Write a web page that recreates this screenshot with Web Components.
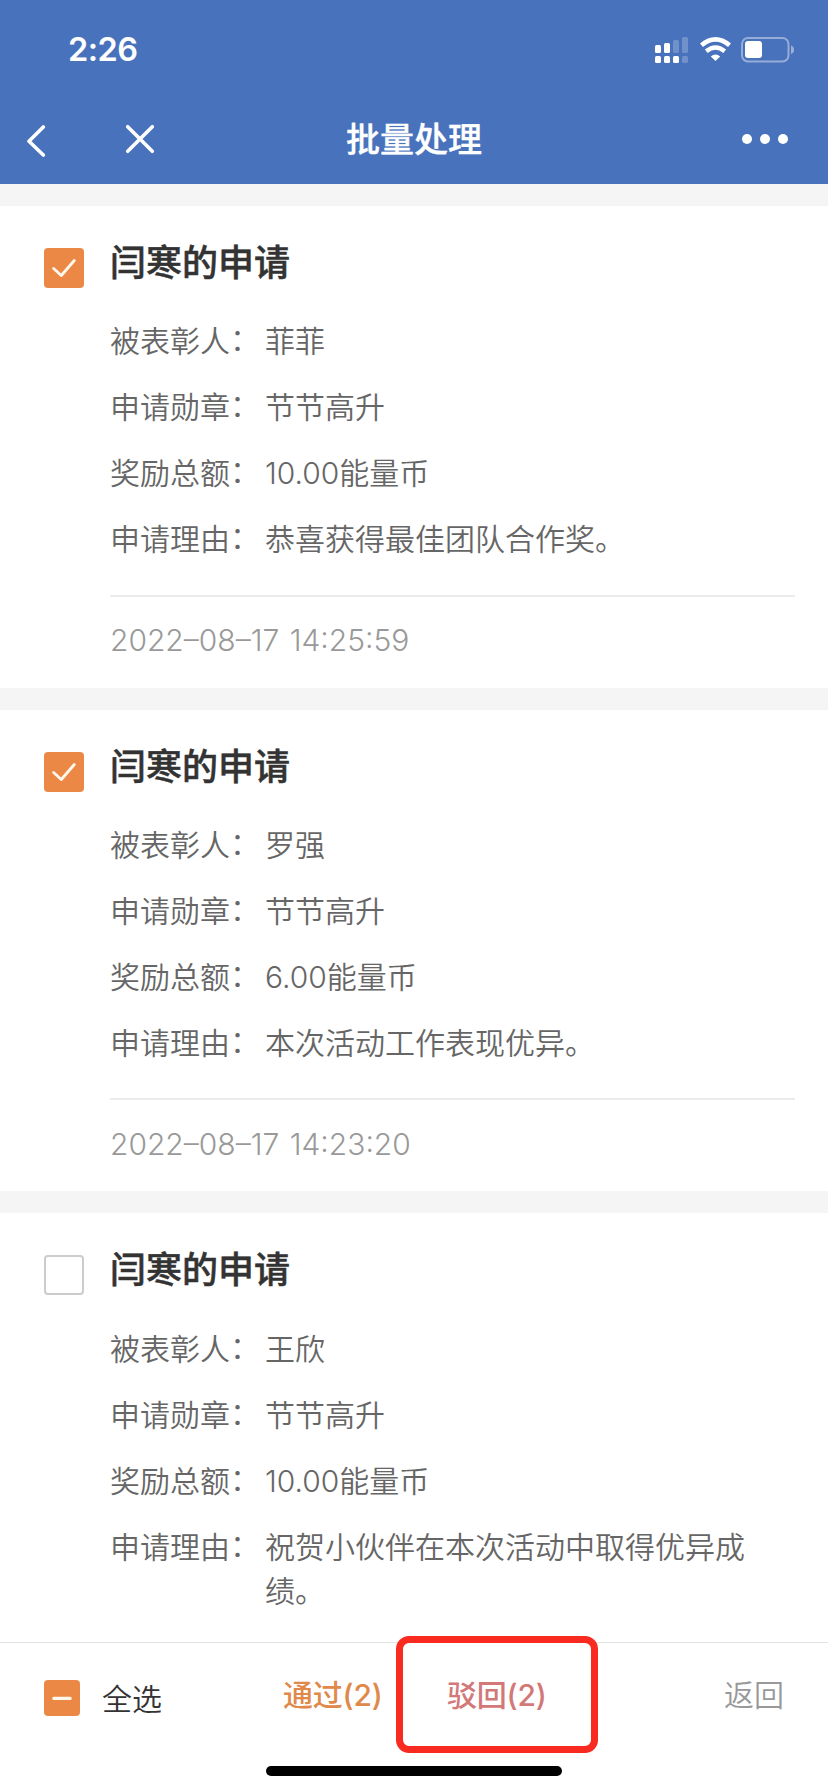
<!DOCTYPE html>
<html lang="zh-CN">
<head>
<meta charset="UTF-8">
<meta name="viewport" content="width=device-width, initial-scale=1.0">
<title>批量处理</title>
<style>
    body{
        margin: 0;
        background: #f5f5f5;
        font-family: Inter, "Noto Sans CJK SC", sans-serif;
        color: #666;
    }
</style>
</head>
<body>
<batch-page>
    <status-bar slot="top" hora="2:26"></status-bar>
    <nav-bar slot="top">批量处理</nav-bar>

    <apply-card estado="on" fecha="2022–08–17 14:25:59">
        <span slot="title">闫寒的申请</span>
        <apply-row label="被表彰人">菲菲</apply-row>
        <apply-row label="申请勋章">节节高升</apply-row>
        <apply-row label="奖励总额">10.00能量币</apply-row>
        <apply-row label="申请理由">恭喜获得最佳团队合作奖。</apply-row>
    </apply-card>
    <apply-card estado="on" fecha="2022–08–17 14:23:20">
        <span slot="title">闫寒的申请</span>
        <apply-row label="被表彰人">罗强</apply-row>
        <apply-row label="申请勋章">节节高升</apply-row>
        <apply-row label="奖励总额">6.00能量币</apply-row>
        <apply-row label="申请理由">本次活动工作表现优异。</apply-row>
    </apply-card>
    <apply-card estado="off">
        <span slot="title">闫寒的申请</span>
        <apply-row label="被表彰人">王欣</apply-row>
        <apply-row label="申请勋章">节节高升</apply-row>
        <apply-row label="奖励总额">10.00能量币</apply-row>
        <apply-row label="申请理由">祝贺小伙伴在本次活动中取得优异成绩。</apply-row>
    </apply-card>

    <action-bar slot="bottom">
        <span slot="all">全选</span>
        <span slot="pass">通过(2)</span>
        <span slot="reject">驳回(2)</span>
        <span slot="back">返回</span>
    </action-bar>
</batch-page>

<script>
class BatchPage extends HTMLElement{
    constructor(){
        super();
        this.attachShadow({ mode: "open" });
    }
    connectedCallback(){
        this.shadowRoot.innerHTML = `
        <style>
        :host{
            display: flex;
            flex-direction: column;
            width: 828px;
            height: 1792px;
            overflow: hidden;
        }
        header{
            background: #4972bc;
            height: 184px;
            flex: none;
        }
        main{
            flex: 1;
            min-height: 0;
            overflow: hidden;
            display: flex;
            flex-direction: column;
            gap: 22px;
            padding-top: 22px;
        }
        </style>
        <header><slot name="top"></slot></header>
        <main><slot></slot></main>
        <slot name="bottom"></slot>
        `;
    }
}
window.customElements.define("batch-page", BatchPage);

class StatusBar extends HTMLElement{
    constructor(){
        super();
        this.attachShadow({ mode: "open" });
    }
    connectedCallback(){
        this.shadowRoot.innerHTML = `
        <style>
        :host{
            display: flex;
            align-items: center;
            justify-content: space-between;
            box-sizing: border-box;
            height: 95px;
            padding: 4px 33px 0 68px;
            color: #fff;
        }
        #hora{
            font-size: 32.5px;
            font-weight: 600;
            letter-spacing: -.5px;
            line-height: 40px;
        }
        svg{
            display: block;
        }
        </style>
        <div id="hora">${this.getAttribute("hora")}</div>
        <svg width="140" height="27" viewBox="655 36 140 27" fill="#fff">
            <g id="signal">
                <rect x="655" y="45" width="6" height="8" rx="1.5"/>
                <rect x="664" y="43" width="6" height="10" rx="1.5"/>
                <rect x="673" y="40" width="6" height="13" rx="1.5" opacity=".22"/>
                <rect x="682" y="37" width="6" height="16" rx="1.5" opacity=".22"/>
                <rect x="655" y="56" width="6" height="7" rx="1.5"/>
                <rect x="664" y="56" width="6" height="7" rx="1.5"/>
                <rect x="673" y="56" width="6" height="7" rx="1.5"/>
                <rect x="682" y="56" width="6" height="7" rx="1.5" opacity=".22"/>
            </g>
            <g id="wifi">
                <path d="M701.5 45.2Q715.5 33.6 729.5 45.2" fill="none" stroke="#fff" stroke-width="4.6"/>
                <path d="M706.3 51.2Q715.5 43.8 724.7 51.2" fill="none" stroke="#fff" stroke-width="4.5"/>
                <path d="M715.5 61L710.8 56.4Q715.5 52.6 720.2 56.4Z"/>
            </g>
            <g id="battery">
                <rect x="742" y="38" width="46.5" height="23.5" rx="6" fill="none" stroke="#fff" stroke-width="2" opacity=".42"/>
                <rect x="745" y="41" width="17" height="17" rx="3"/>
                <path d="M791 45.5Q794 46.5 794 49.7T791 54Z" opacity=".45"/>
            </g>
        </svg>
        `;
    }
}
window.customElements.define("status-bar", StatusBar);

class NavBar extends HTMLElement{
    constructor(){
        super();
        this.attachShadow({ mode: "open" });
    }
    connectedCallback(){
        this.shadowRoot.innerHTML = `
        <style>
        :host{
            display: grid;
            grid-template-columns: 1fr auto 1fr;
            align-items: center;
            height: 88px;
            color: #fff;
        }
        #izq{
            display: flex;
            align-items: center;
            gap: 79px;
            padding-left: 26px;
        }
        #titulo{
            font-size: 34px;
            font-weight: 500;
            line-height: 48px;
            padding-top: 2px;
            -webkit-text-stroke: .3px #fff;
        }
        #mas{
            justify-self: end;
            padding-right: 40px;
        }
        svg{
            display: block;
        }
        </style>
        <div id="izq">
            <svg width="20" height="36" viewBox="0 0 20 36" fill="none" stroke="#fff" stroke-width="3.6" stroke-linecap="round" stroke-linejoin="round">
                <path d="M17.3 6L3 20.3L17.3 34"/>
            </svg>
            <svg width="30" height="30" viewBox="0 0 30 30" fill="none" stroke="#fff" stroke-width="3.6" stroke-linecap="round">
                <path d="M2.7 2.7L27.3 27.3M27.3 2.7L2.7 27.3"/>
            </svg>
        </div>
        <div id="titulo"><slot></slot></div>
        <div id="mas">
            <svg width="46" height="10" viewBox="0 0 46 10" fill="#fff">
                <circle cx="5" cy="5" r="5"/><circle cx="23" cy="5" r="5"/><circle cx="41" cy="5" r="5"/>
            </svg>
        </div>
        `;
    }
}
window.customElements.define("nav-bar", NavBar);

class CheckBox extends HTMLElement{
    constructor(){
        super();
        this.attachShadow({ mode: "open" });
    }
    connectedCallback(){
        let estado = this.getAttribute("estado");
        let dibujo = "";
        if(estado == "on"){
            dibujo = `<path d="M9.6 20.5L17.3 27.5L30.3 12.5"/>`;
        }
        if(estado == "half"){
            dibujo = `<path d="M11 20.5H29" stroke-width="3.6"/>`;
        }
        this.shadowRoot.innerHTML = `
        <style>
        :host{
            display: block;
            flex: none;
            box-sizing: border-box;
            width: var(--lado, 40px);
            height: var(--lado, 40px);
            border-radius: 4px;
            background: ${estado == "off" ? "#fff" : "#eb8845"};
            border: ${estado == "off" ? "2px solid #ccc" : "0"};
        }
        svg{
            display: block;
            width: 100%;
            height: 100%;
        }
        </style>
        <svg viewBox="0 0 40 40" fill="none" stroke="#fff8ee" stroke-width="2.8" stroke-linecap="round" stroke-linejoin="round">${dibujo}</svg>
        `;
    }
}
window.customElements.define("check-box", CheckBox);

class ApplyRow extends HTMLElement{
    constructor(){
        super();
        this.attachShadow({ mode: "open" });
    }
    connectedCallback(){
        this.shadowRoot.innerHTML = `
        <style>
        :host{
            display: flex;
            gap: 5px;
            font-size: 30px;
            line-height: 44px;
        }
        #label{
            flex: none;
            width: 150px;
            white-space: nowrap;
        }
        /* the full-width colon sits low in Noto, lift it a little */
        #label span{
            display: inline-block;
            transform: translateY(-2px);
        }
        #valor{
            width: 490px;
        }
        </style>
        <div id="label">${this.getAttribute("label")}<span>：</span></div>
        <div id="valor"><slot></slot></div>
        `;
    }
}
window.customElements.define("apply-row", ApplyRow);

class ApplyCard extends HTMLElement{
    constructor(){
        super();
        this.attachShadow({ mode: "open" });
    }
    connectedCallback(){
        let fecha = this.getAttribute("fecha");
        this.shadowRoot.innerHTML = `
        <style>
        :host{
            display: flex;
            flex: none;
            gap: 26px;
            box-sizing: border-box;
            height: 481.7px;
            padding: 32px 33px 0 44px;
            background: #fff;
        }
        check-box{
            margin-top: 10px;
        }
        #cuerpo{
            flex: 1;
        }
        #titulo{
            font-size: 36px;
            font-weight: 500;
            line-height: 50px;
            color: #333;
            -webkit-text-stroke: .5px #333;
        }
        #filas{
            display: flex;
            flex-direction: column;
            gap: 22px;
            padding: 31.2px 0 33.6px;
            font-weight: 350;
        }
        #fecha{
            border-top: 2px solid #ebebeb;
            padding-top: 21.5px;
            font-size: 30px;
            font-weight: 350;
            word-spacing: 2px;
            line-height: 44px;
            color: #999;
        }
        </style>
        <check-box estado="${this.getAttribute("estado")}"></check-box>
        <div id="cuerpo">
            <div id="titulo"><slot name="title"></slot></div>
            <div id="filas"><slot></slot></div>
            ${fecha ? `<div id="fecha">${fecha}</div>` : ""}
        </div>
        `;
    }
}
window.customElements.define("apply-card", ApplyCard);

class ActionBar extends HTMLElement{
    constructor(){
        super();
        this.attachShadow({ mode: "open" });
    }
    connectedCallback(){
        this.shadowRoot.innerHTML = `
        <style>
        :host{
            display: flex;
            flex-direction: column;
            align-items: center;
            flex: none;
            box-sizing: border-box;
            height: 150px;
            border-top: 1px solid #e2e2e2;
            background: #fff;
            position: relative;
        }
        #fila{
            display: grid;
            grid-template-columns: 239px 164px 277px 1fr;
            align-items: center;
            align-self: stretch;
            height: 104px;
            padding-left: 44px;
            font-size: 30px;
            line-height: 44px;
        }
        #todo{
            display: flex;
            align-items: center;
            gap: 22px;
            padding-top: 6px;
            color: #333;
            font-weight: 350;
            --lado: 36px;
        }
        #todo div{
            padding-top: 2px;
        }
        #pass{
            color: #e0894a;
            font-weight: 500;
            letter-spacing: -.2px;
        }
        #reject{
            color: #d27878;
            font-weight: 500;
            letter-spacing: -.2px;
        }
        #back{
            color: #999;
            font-weight: 350;
        }
        #marco{
            position: absolute;
            left: 396px;
            top: -7px;
            box-sizing: border-box;
            width: 202px;
            height: 117px;
            border: 7px solid #f92b20;
            border-radius: 13px;
        }
        #home{
            width: 296px;
            height: 10px;
            margin-top: 19px;
            border-radius: 5px;
            background: #000;
        }
        </style>
        <div id="fila">
            <div id="todo"><check-box estado="half"></check-box><div><slot name="all"></slot></div></div>
            <div id="pass"><slot name="pass"></slot></div>
            <div id="reject"><slot name="reject"></slot></div>
            <div id="back"><slot name="back"></slot></div>
        </div>
        <div id="home"></div>
        <div id="marco"></div>
        `;
    }
}
window.customElements.define("action-bar", ActionBar);
</script>
</body>
</html>
